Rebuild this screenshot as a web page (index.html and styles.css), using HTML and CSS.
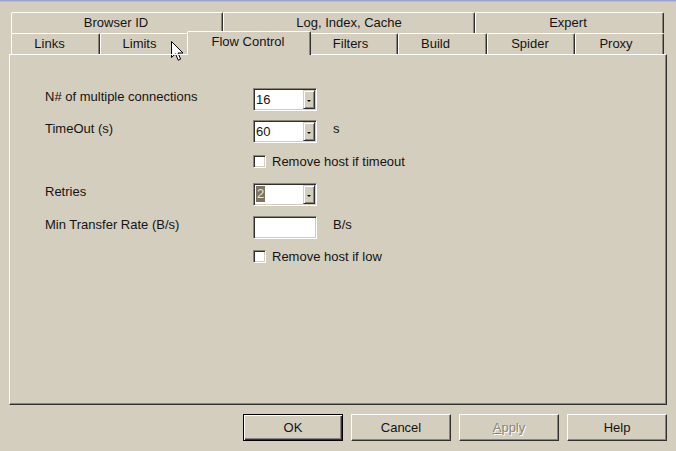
FILE: index.html
```html
<!DOCTYPE html>
<html>
<head>
<meta charset="utf-8">
<link rel="stylesheet" href="styles.css">
</head>
<body>
<div class="titlestrip"></div>
<div class="tabs">
  <div class="tabrow">
    <div class="tab t212 sh2">Browser ID</div>
    <div class="tab t252">Log, Index, Cache</div>
    <div class="tab t189 sh3">Expert</div>
  </div>
  <div class="tabrow">
    <div class="tab t89 sh12">Links</div>
    <div class="tab t89 sh10">Limits</div>
    <div class="tab active sh2">Flow Control</div>
    <div class="tab t89 sh6">Filters</div>
    <div class="tab t89 sh14">Build</div>
    <div class="tab t88 sh2">Spider</div>
    <div class="tab t89 sh7">Proxy</div>
  </div>
</div>
<div class="panel">
  <div class="form">
    <div class="row r1">
      <div class="label">N# of multiple connections</div>
      <div class="combo"><span class="val">16</span><span class="drop"><i></i></span></div>
    </div>
    <div class="row r2">
      <div class="label">TimeOut (s)</div>
      <div class="combo"><span class="val">60</span><span class="drop"><i></i></span></div>
      <div class="unit">s</div>
    </div>
    <div class="chkrow c1">
      <span class="box"></span><span class="chklabel">Remove host if timeout</span>
    </div>
    <div class="row r3">
      <div class="label">Retries</div>
      <div class="combo"><span class="val"><span class="sel">2</span></span><span class="drop"><i></i></span></div>
    </div>
    <div class="row r4">
      <div class="label">Min Transfer Rate (B/s)</div>
      <div class="edit"></div>
      <div class="unit">B/s</div>
    </div>
    <div class="chkrow c2">
      <span class="box"></span><span class="chklabel">Remove host if low</span>
    </div>
  </div>
</div>
<div class="buttons">
  <button class="btn default">OK</button>
  <button class="btn">Cancel</button>
  <button class="btn disabled"><u>A</u>pply</button>
  <button class="btn">Help</button>
</div>
<svg class="cursor" width="13" height="21" viewBox="0 0 13 21">
  <path d="M0.5 0.5 L0.5 16.5 L4.5 12.8 L7.2 19.2 L9.6 18.2 L7 12 L12 12 Z" fill="#fff" stroke="#000" stroke-width="1" stroke-linejoin="miter"/>
</svg>
</body>
</html>
```
FILE: styles.css
```css
html, body {
  margin: 0;
  padding: 0;
}
body {
  width: 676px;
  height: 451px;
  overflow: hidden;
  background: #d4cebe;
  font-family: "Liberation Sans", Arial, sans-serif;
  font-size: 13px;
  color: #141414;
  position: relative;
}
.titlestrip {
  height: 2px;
  background: linear-gradient(#8f98c6, #c4c6d2);
}
.tabs {
  margin-top: 10px;
  margin-left: 11px;
  width: 653px;
}
.tabrow {
  display: flex;
  height: 21px;
  align-items: flex-start;
}
.tab {
  box-sizing: border-box;
  height: 21px;
  border-top: 1px solid #fff;
  border-left: 1px solid #fff;
  border-right: 1px solid #303030;
  border-radius: 2px 2px 0 0;
  box-shadow: inset -1px 0 #8a8578;
  text-align: center;
  line-height: 15px;
  padding-top: 2px;
  white-space: nowrap;
  background: #d4cebe;
}
.t212 { width: 212px; }
.t252 { width: 252px; }
.t189 { width: 189px; }
.t89 { width: 89px; }
.t88 { width: 88px; }
.sh2 { padding-right: 2px; }
.sh3 { padding-right: 3px; }
.sh6 { padding-right: 6px; }
.sh7 { padding-right: 7px; }
.sh10 { padding-right: 10px; }
.sh12 { padding-right: 12px; }
.sh14 { padding-right: 14px; }
.tab.active {
  width: 124px;
  height: 24px;
  margin: -2px -2px 0 -2px;
  position: relative;
  z-index: 2;
  padding-top: 2px;
}
.panel {
  box-sizing: border-box;
  margin-left: 9px;
  width: 658px;
  height: 351px;
  border-top: 1px solid #fff;
  border-left: 1px solid #fff;
  border-right: 1px solid #303030;
  border-bottom: 1px solid #303030;
  box-shadow: inset -1px -1px #8a8578;
  position: relative;
  z-index: 1;
}
.form {
  padding-top: 33px;
  padding-left: 35px;
}
.row {
  display: flex;
  align-items: flex-start;
  height: 23px;
}
.r2 { margin-top: 9px; }
.r3 { margin-top: 15px; }
.r4 { margin-top: 10px; }
.label {
  width: 208px;
  line-height: 15px;
  padding-top: 1px;
  white-space: nowrap;
}
.unit {
  margin-left: 16px;
  line-height: 15px;
  padding-top: 1px;
}
.combo, .edit {
  box-sizing: border-box;
  width: 64px;
  height: 23px;
  border: 1px solid;
  border-color: #8a8578 #fff #fff #8a8578;
  box-shadow: inset 1px 1px #303030, inset -1px -1px #d4cebe;
  background: #fff;
  display: flex;
  padding: 1px;
}
.val {
  flex: 1;
  line-height: 19px;
  padding-left: 1px;
}
.sel {
  display: inline-block;
  background: #7d7462;
  color: #e9e4d8;
  line-height: 16px;
  padding: 0 1px;
  margin-top: 1px;
  vertical-align: top;
}
.drop {
  box-sizing: border-box;
  width: 12px;
  height: 19px;
  background: #d4cebe;
  border: 1px solid;
  border-color: #d4cebe #303030 #303030 #d4cebe;
  box-shadow: inset 1px 1px #fff, inset -1px -1px #8a8578;
  display: flex;
  align-items: center;
  justify-content: center;
}
.drop i {
  display: block;
  width: 0;
  height: 0;
  border-left: 2px solid transparent;
  border-right: 2px solid transparent;
  border-top: 2px solid #000;
  margin-top: 2px;
}
.chkrow {
  display: flex;
  align-items: center;
  height: 13px;
  margin-left: 208px;
}
.c1 { margin-top: 12px; }
.c2 { margin-top: 11px; }
.box {
  box-sizing: border-box;
  width: 13px;
  height: 13px;
  border: 1px solid;
  border-color: #8a8578 #fff #fff #8a8578;
  box-shadow: inset 1px 1px #303030, inset -1px -1px #d4cebe;
  background: #fff;
}
.chklabel {
  margin-left: 6px;
  line-height: 15px;
  white-space: nowrap;
  margin-top: -1px;
}
.buttons {
  display: flex;
  gap: 8px;
  margin-top: 9px;
  padding-left: 243px;
}
.btn {
  box-sizing: border-box;
  width: 100px;
  height: 27px;
  padding: 0;
  margin: 0;
  font: inherit;
  color: #141414;
  background: #d4cebe;
  border: 1px solid;
  border-color: #fff #303030 #303030 #fff;
  box-shadow: inset -1px -1px #8a8578;
  border-radius: 0;
  text-align: center;
  line-height: 23px;
}
.btn.default {
  border-color: #000;
  box-shadow: inset 1px 1px #fff, inset -1px -1px #303030, inset -2px -2px #8a8578;
}
.btn.disabled {
  color: #8a8578;
  text-shadow: 1px 1px #fff;
}
.btn.disabled u {
  text-decoration: underline;
}
.cursor {
  position: absolute;
  left: 171px;
  top: 41px;
}
```
